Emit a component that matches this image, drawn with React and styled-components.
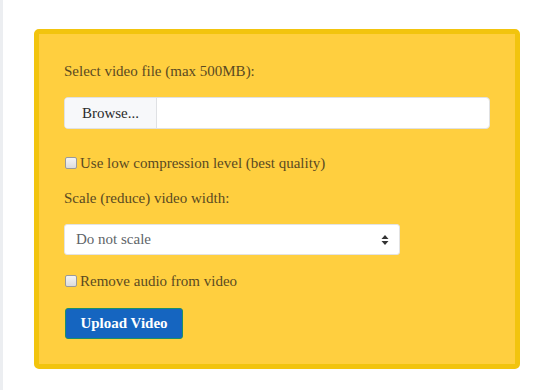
import styled, { createGlobalStyle, css } from "styled-components";

const serifText = css`
  font-family: "Liberation Serif", "Times New Roman", serif;
  font-size: 15px;
`;

const GlobalStyle = createGlobalStyle`
  html, body {
    margin: 0;
    padding: 0;
    background: #ffffff;
  }
  body {
    border-left: 3px solid #eceef1;
    min-height: 390px;
    box-sizing: border-box;
  }
`;

const Page = styled.div`
  padding: 29px 0 0 31px;
`;

const Panel = styled.form`
  width: 486px;
  height: 340px;
  box-sizing: border-box;
  background: #ffcf3f;
  border: 5px solid #f2c40e;
  border-radius: 5px;
  padding: 25px 25px;
  display: flex;
  flex-direction: column;
`;

const Label = styled.div`
  ${serifText};
  line-height: 24px;
  color: #5a4a22;
  margin-bottom: ${(p) => p.$mb || 14}px;
`;

const FileRow = styled.div`
  display: flex;
  height: 32px;
  box-sizing: border-box;
  border: 1px solid #e0e1e3;
  border-radius: 4px;
  background: #ffffff;
  overflow: hidden;
  margin-bottom: 22px;
`;

const BrowseBtn = styled.div`
  ${serifText};
  width: 91px;
  display: flex;
  align-items: center;
  justify-content: center;
  background: #f7f8fa;
  border-right: 1px solid #dfe1e4;
  color: #2b2b2b;
`;

const CheckRow = styled.label`
  ${serifText};
  display: flex;
  align-items: center;
  line-height: 24px;
  color: #5a4a22;
  margin-bottom: ${(p) => p.$mb || 11}px;
`;

const Box = styled.span`
  width: 10px;
  height: 10px;
  border: 1px solid #9a9a9a;
  border-radius: 2px;
  background: linear-gradient(#f4f4f4, #dcdcdc);
  margin: 0 3px 0 1px;
`;

const Select = styled.div`
  ${serifText};
  width: 336px;
  height: 31px;
  box-sizing: border-box;
  display: flex;
  align-items: center;
  justify-content: space-between;
  padding: 0 10px 0 11px;
  background: #ffffff;
  border: 1px solid #e3e3e3;
  border-radius: 3px;
  color: #606468;
  margin-bottom: 14px;
`;

const UploadBtn = styled.button`
  ${serifText};
  align-self: flex-start;
  width: 118px;
  height: 31px;
  background: #1565c0;
  border: 1px solid #1c8f6a;
  border-radius: 3px;
  color: #ffffff;
  font-weight: 700;
  margin-left: 1px;
  padding: 0;
`;

const Arrows = () => (
  <svg width="8" height="12" viewBox="0 0 8 12">
    <path d="M4 1 L7.5 5 H0.5 Z" fill="#333" />
    <path d="M4 11 L7.5 7 H0.5 Z" fill="#333" />
  </svg>
);

export default function App() {
  return (
    <>
      <GlobalStyle />
      <Page>
        <Panel>
          <Label>Select video file (max 500MB):</Label>
          <FileRow>
            <BrowseBtn>Browse...</BrowseBtn>
          </FileRow>
          <CheckRow>
            <Box />
            Use low compression level (best quality)
          </CheckRow>
          <Label $mb={14}>Scale (reduce) video width:</Label>
          <Select>
            Do not scale
            <Arrows />
          </Select>
          <CheckRow $mb={15}>
            <Box />
            Remove audio from video
          </CheckRow>
          <UploadBtn type="button">Upload Video</UploadBtn>
        </Panel>
      </Page>
    </>
  );
}
